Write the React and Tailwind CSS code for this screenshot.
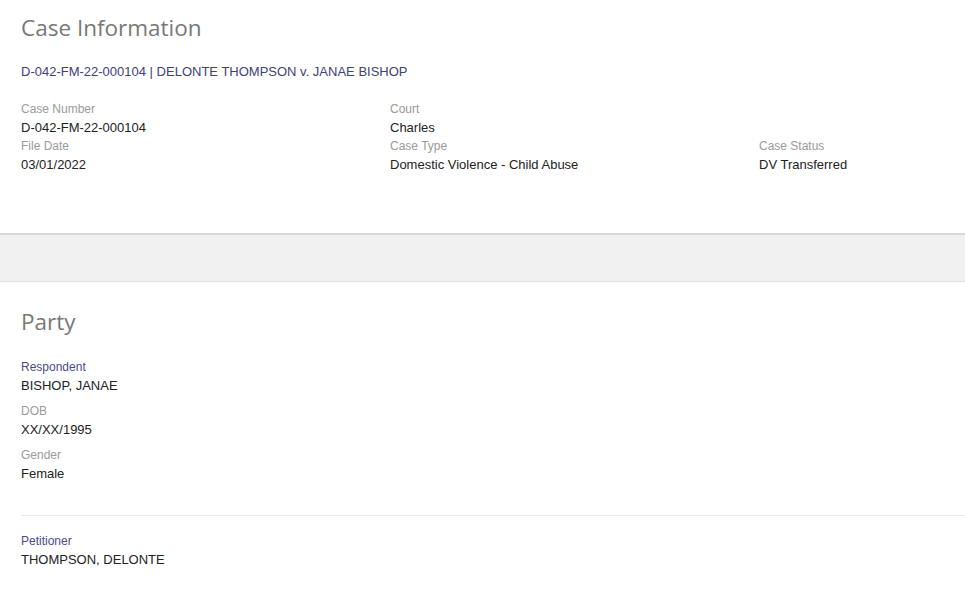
import React from 'react';

const caseFields = [
    { label: 'Case Number', value: 'D-042-FM-22-000104' },
    { label: 'Court', value: 'Charles' },
    null,
    { label: 'File Date', value: '03/01/2022' },
    { label: 'Case Type', value: 'Domestic Violence - Child Abuse' },
    { label: 'Case Status', value: 'DV Transferred' },
];

const Field = ({ label, value, accent }) => (
    <div className="flex flex-col">
        <span className={`${accent ? 'text-[#4b4b8c]' : 'text-[#9a9a9a]'} text-[12px] leading-[18px]`}>{label}</span>
        <span className="text-[#222222] text-[13px] leading-[19px]">{value}</span>
    </div>
);

const App = () => {
    return (
        <div className="w-[965px] h-[595px] overflow-hidden bg-white font-['Liberation_Sans',Arial,sans-serif]">
            {/* Case information */}
            <section className="pl-[21px] pt-[13px] h-[233px]">
                <h2 className="font-['Open_Sans',sans-serif] text-[22.5px] leading-[30px] text-[#787878]">Case Information</h2>
                <p className="mt-[20px] text-[13px] leading-[18px] text-[#40407a]">
                    D-042-FM-22-000104 | DELONTE THOMPSON v. JANAE BISHOP
                </p>
                <div className="mt-[19px] grid grid-cols-[369px_369px_369px]">
                    {caseFields.map((f, i) =>
                        f ? <Field key={i} label={f.label} value={f.value} /> : <div key={i} />
                    )}
                </div>
            </section>

            <div className="h-[49px] bg-[#f1f1f1] border-t-2 border-t-[#d8d8d8] border-b border-b-[#e2e2e2]" />

            {/* Party */}
            <section className="pl-[21px] pt-[25px]">
                <h2 className="font-['Open_Sans',sans-serif] text-[22.5px] leading-[30px] text-[#787878]">Party</h2>
                <div className="mt-[21px] flex flex-col gap-[7px]">
                    <Field label="Respondent" value="BISHOP, JANAE" accent />
                    <Field label="DOB" value="XX/XX/1995" />
                    <Field label="Gender" value="Female" />
                </div>
                <div className="mt-[32px] border-t border-[#e8e8e8]" />
                <div className="mt-[16px]">
                    <Field label="Petitioner" value="THOMPSON, DELONTE" accent />
                </div>
            </section>
        </div>
    );
};

export default App;
